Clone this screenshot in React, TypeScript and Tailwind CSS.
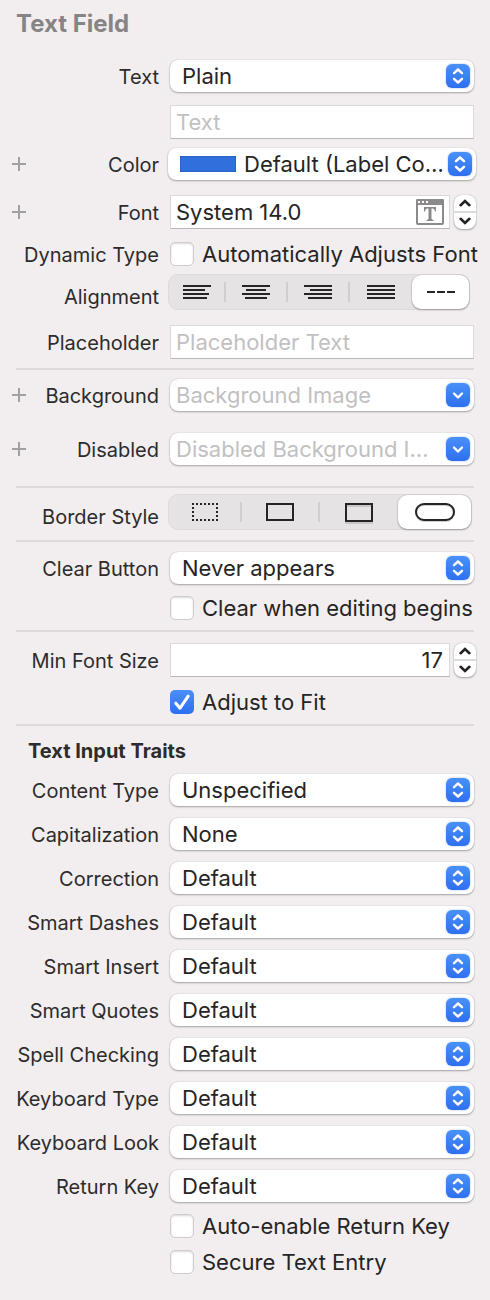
import { useId, useState, type ReactNode } from "react";

const selectBox =
  "h-8 w-full appearance-none truncate rounded-lg bg-white text-[22px] text-[#262424] shadow-[0_0_1px_rgba(0,0,0,0.25),0_1px_2px_rgba(0,0,0,0.3)] outline-none";
const textBox =
  "h-[34px] w-full min-w-0 border border-[#dcd9da] border-b-[#b9b6b7] bg-white pl-[5px] text-[22px] text-[#262424] outline-none placeholder:text-[#c2c0c1]";

function Row({
  label,
  htmlFor,
  add,
  low,
  className,
  children,
}: {
  label?: string;
  htmlFor?: string;
  add?: boolean;
  low?: boolean;
  className: string;
  children: ReactNode;
}) {
  return (
    <div className={`grid grid-cols-[16px_127px_minmax(0,1fr)] items-center ${className}`}>
      <div className="flex">
        {add && (
          <button type="button" aria-label={`Add ${label} variation`} className="-ml-1">
            <svg width="14" height="14" viewBox="0 0 14 14" className="block" stroke="#a3a0a1" strokeWidth="2">
              <path d="M7 0v14M0 7h14" />
            </svg>
          </button>
        )}
      </div>
      {label ? (
        <label
          htmlFor={htmlFor}
          className={`justify-self-end text-xl leading-5 whitespace-nowrap text-[#2d2b2b] ${low ? "pt-2.5" : "pt-0.5"}`}
        >
          {label}
        </label>
      ) : (
        <span />
      )}
      <div className="pl-[11px]">{children}</div>
    </div>
  );
}

function Badge({ single }: { single?: boolean }) {
  return (
    <span className="pointer-events-none absolute top-1 right-1 flex size-6 items-center justify-center rounded-md bg-linear-to-b from-[#4a90f9] to-[#2f6ff0] shadow-[0_0_2px_rgba(47,111,240,0.5)]">
      <svg
        width="24"
        height="24"
        viewBox="0 0 24 24"
        fill="none"
        stroke="white"
        strokeWidth="2.4"
        strokeLinecap="round"
        strokeLinejoin="round"
      >
        {single ? <path d="M8 10.5l4 4 4-4" /> : <path d="M8 9.2l4-3.7 4 3.7M8 14.8l4 3.7 4-3.7" />}
      </svg>
    </span>
  );
}

function SelectRow({ label, value, className }: { label: string; value: string; className: string }) {
  const id = useId();
  return (
    <Row label={label} htmlFor={id} className={className}>
      <div className="relative">
        <select id={id} className={`${selectBox} block pr-9 pl-3`}>
          <option>{value}</option>
        </select>
        <Badge />
      </div>
    </Row>
  );
}

function ComboRow({ label, hint, className }: { label: string; hint: string; className: string }) {
  const id = useId();
  return (
    <Row label={label} htmlFor={id} add className={className}>
      <div className="relative">
        <input id={id} type="text" placeholder={hint} className={`${selectBox} block pr-9 pl-1.5 placeholder:text-[#c2c0c1]`} />
        <Badge single />
      </div>
    </Row>
  );
}

function Check({ text, initial = false }: { text: string; initial?: boolean }) {
  const [on, setOn] = useState(initial);
  return (
    <label className="flex h-6 items-center gap-2 text-[22px] leading-6 whitespace-nowrap text-[#262424]">
      <span className="relative size-6 shrink-0">
        <input
          type="checkbox"
          checked={on}
          onChange={() => setOn(!on)}
          className="block size-6 appearance-none rounded-[5px] border border-[#cfcccd] bg-white shadow-[inset_0_1px_2px_rgba(0,0,0,0.15)] checked:border-0 checked:bg-linear-to-b checked:from-[#4a8ff9] checked:to-[#2f6ff0] checked:shadow-none"
        />
        {on && (
          <svg
            viewBox="0 0 24 24"
            fill="none"
            stroke="white"
            strokeWidth="3"
            strokeLinecap="round"
            strokeLinejoin="round"
            className="pointer-events-none absolute inset-0 size-6"
          >
            <path d="M5.8 13.2l4.2 5 8.2-12" />
          </svg>
        )}
      </span>
      {text}
    </label>
  );
}

function Stepper({ name }: { name: string }) {
  return (
    <div className="-mr-0.5 flex h-[34px] w-[22px] shrink-0 flex-col divide-y-2 divide-[#dedbdc] overflow-hidden rounded-lg bg-white shadow-[0_0_1px_rgba(0,0,0,0.3),0_1px_2px_rgba(0,0,0,0.3)]">
      <button type="button" aria-label={`Increase ${name}`} className="flex flex-1 items-center justify-center">
        <svg width="12" height="8" viewBox="0 0 12 8" fill="none" stroke="#262424" strokeWidth="2.6" strokeLinecap="round">
          <path d="M1.6 6.2L6 2l4.4 4.2" />
        </svg>
      </button>
      <button type="button" aria-label={`Decrease ${name}`} className="flex flex-1 items-center justify-center">
        <svg width="12" height="8" viewBox="0 0 12 8" fill="none" stroke="#262424" strokeWidth="2.6" strokeLinecap="round">
          <path d="M1.6 1.8L6 6l4.4-4.2" />
        </svg>
      </button>
    </div>
  );
}

function Segments({
  items,
  columns,
  initial,
}: {
  items: { name: string; icon: ReactNode }[];
  columns: string;
  initial: number;
}) {
  const [active, setActive] = useState(initial);
  return (
    <div className={`-ml-0.5 grid h-9 rounded-[10px] border border-[#dedadb] bg-[#e6e3e4] ${columns}`}>
      {items.map((item, i) => (
        <button
          key={item.name}
          type="button"
          aria-label={item.name}
          aria-pressed={active === i}
          onClick={() => setActive(i)}
          className={
            active === i
              ? "flex items-center justify-center rounded-[9px] bg-white shadow-[0_0_1px_rgba(0,0,0,0.3),0_1px_2px_rgba(0,0,0,0.3)]"
              : "flex items-center justify-center"
          }
        >
          <span className="flex flex-1 justify-center">{item.icon}</span>
          {active !== i && active !== i + 1 && i < items.length - 1 && <span className="h-5 w-0.5 bg-[#d2cecf]" />}
        </button>
      ))}
    </div>
  );
}

function Lines({ d }: { d: string }) {
  return (
    <svg width="28" height="14" viewBox="0 0 28 14" stroke="#262424" strokeWidth="2" className="block">
      <path d={d} />
    </svg>
  );
}

const alignments = [
  { name: "Left", icon: <Lines d="M0 1h28M0 5h22M0 9h26M0 13h24" /> },
  { name: "Center", icon: <Lines d="M0 1h28M4 5h20M0 9h28M3 13h22" /> },
  { name: "Right", icon: <Lines d="M0 1h28M6 5h22M0 9h28M4 13h24" /> },
  { name: "Justified", icon: <Lines d="M0 1h28M0 5h28M0 9h28M0 13h28" /> },
  { name: "Natural", icon: <Lines d="M0 7h8M10 7h8M20 7h8" /> },
];

const borders = [
  {
    name: "None",
    icon: (
      <svg width="26" height="22" viewBox="0 0 26 22" fill="none" stroke="#262424" strokeWidth="2" className="block">
        <path d="M0 3h26M0 19h26" strokeDasharray="2 2" />
        <path d="M1 6v12M25 6v12" strokeDasharray="2 2" />
      </svg>
    ),
  },
  {
    name: "Line",
    icon: (
      <svg width="28" height="22" viewBox="0 0 28 22" fill="none" stroke="#262424" strokeWidth="2" className="block">
        <path d="M1 3h26v16H1z" />
      </svg>
    ),
  },
  {
    name: "Bezel",
    icon: (
      <svg width="28" height="24" viewBox="0 0 28 24" fill="none" strokeWidth="2" className="block">
        <path d="M2 6h24M0 23h28" stroke="#c9c6c7" />
        <path d="M1 4h26v17H1z" stroke="#262424" />
      </svg>
    ),
  },
  {
    name: "Rounded Rect",
    icon: (
      <svg width="40" height="22" viewBox="0 0 40 22" fill="none" strokeWidth="2" className="block">
        <rect x="1" y="4" width="38" height="16" rx="8" stroke="#d0cdce" />
        <rect x="1" y="3" width="38" height="16" rx="8" stroke="#262424" />
      </svg>
    ),
  },
];

const traits = [
  ["Capitalization", "None"],
  ["Correction", "Default"],
  ["Smart Dashes", "Default"],
  ["Smart Insert", "Default"],
  ["Smart Quotes", "Default"],
  ["Spell Checking", "Default"],
  ["Keyboard Type", "Default"],
  ["Keyboard Look", "Default"],
  ["Return Key", "Default"],
];

export default function App() {
  return (
    <main className="min-h-screen overflow-hidden bg-[#f2eeef] px-4 pt-2 pb-6 font-[Inter,'Liberation_Sans',sans-serif]">
      <h1 className="h-8 text-2xl leading-8 font-bold text-[#878485]">Text Field</h1>

      <SelectRow label="Text" value="Plain" className="mt-5" />
      <Row className="mt-[13px]">
        <input type="text" aria-label="Text value" placeholder="Text" className={`${textBox} block pr-1.5`} />
      </Row>
      <Row label="Color" htmlFor="color" add className="mt-[9px]">
        <div className="relative -mx-0.5">
          <select id="color" className={`${selectBox} block pr-7 pl-[76px]`}>
            <option>Default (Label Color)</option>
          </select>
          <span className="pointer-events-none absolute top-2 left-3 h-4 w-14 border border-[#2a63c4] bg-[#2f70dc]" />
          <Badge />
        </div>
      </Row>
      <Row label="Font" htmlFor="font" add className="mt-[15px]">
        <div className="flex gap-1">
          <div className="relative min-w-0 flex-1">
            <input id="font" type="text" defaultValue="System 14.0" className={`${textBox} block pr-10`} />
            <button type="button" aria-label="Choose font" className="absolute top-1 right-1.5">
              <svg width="28" height="26" viewBox="0 0 28 26" className="block">
                <rect x="1" y="1" width="26" height="24" rx="1" fill="white" stroke="#8b898a" strokeWidth="2" />
                <path d="M0 1.5Q0 0 1.5 0h25Q28 0 28 1.5V6H0z" fill="#8b898a" />
                <path d="M2 3h2M6 3h2M10 3h2" stroke="white" strokeWidth="2" />
                <path
                  d="M8 8h12v4.5h-1q-.4-3-2.500-3H15.500V19.500q0 1.300 2 1.500V22h-7v-1q2-.2 2-1.500V9.500h-1Q9.400 9.500 9 12.500H8z"
                  fill="#8b898a"
                />
              </svg>
            </button>
          </div>
          <Stepper name="font size" />
        </div>
      </Row>
      <Row label="Dynamic Type" className="mt-[13px]">
        <Check text="Automatically Adjusts Font" />
      </Row>
      <Row label="Alignment" low className="mt-2">
        <div className="pr-1">
          <Segments items={alignments} columns="grid-cols-[57fr_62fr_62fr_62fr_57fr]" initial={4} />
        </div>
      </Row>
      <Row label="Placeholder" htmlFor="placeholder" className="mt-[15px]">
        <input id="placeholder" type="text" placeholder="Placeholder Text" className={`${textBox} block pr-1.5`} />
      </Row>

      <hr className="mt-[9px] border-t-2 border-[#dedadb]" />
      <ComboRow label="Background" hint="Background Image" className="mt-[9px]" />
      <ComboRow label="Disabled" hint="Disabled Background Image" className="mt-[22px]" />

      <hr className="mt-[21px] border-t-2 border-[#dedadb]" />
      <Row label="Border Style" low className="mt-1.5">
        <div className="pr-0.5">
          <Segments items={borders} columns="grid-cols-[73fr_78fr_78fr_73fr]" initial={3} />
        </div>
      </Row>

      <hr className="mt-2.5 border-t-2 border-[#dedadb]" />
      <SelectRow label="Clear Button" value="Never appears" className="mt-2.5" />
      <Row className="mt-3">
        <Check text="Clear when editing begins" />
      </Row>

      <hr className="mt-2.5 border-t-2 border-[#dedadb]" />
      <Row label="Min Font Size" htmlFor="min-size" className="mt-[11px]">
        <div className="flex gap-1">
          <input id="min-size" type="text" defaultValue="17" className={`${textBox} flex-1 pr-1.5 text-right`} />
          <Stepper name="minimum font size" />
        </div>
      </Row>
      <Row className="mt-[13px]">
        <Check text="Adjust to Fit" initial />
      </Row>

      <hr className="mt-2.5 border-t-2 border-[#dedadb]" />
      <h2 className="mt-3 pt-0.5 pl-3 text-xl leading-[22px] font-bold text-[#2d2b2b]">Text Input Traits</h2>
      <SelectRow label="Content Type" value="Unspecified" className="mt-3" />
      {traits.map(([label, value]) => (
        <SelectRow key={label} label={label} value={value} className="mt-3" />
      ))}
      <Row className="mt-3">
        <Check text="Auto-enable Return Key" />
      </Row>
      <Row className="mt-3">
        <Check text="Secure Text Entry" />
      </Row>
    </main>
  );
}
